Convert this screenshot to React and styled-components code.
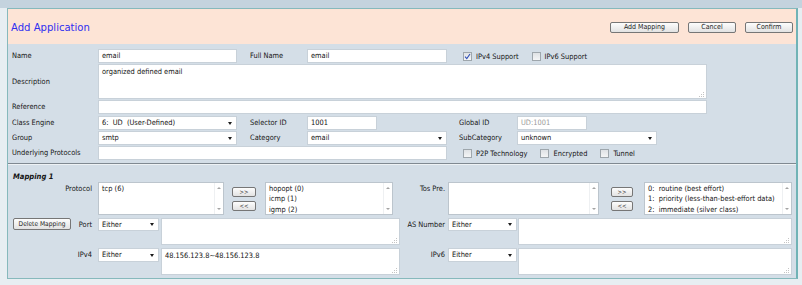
import React from "react";
import styled, { createGlobalStyle } from "styled-components";

const GlobalStyle = createGlobalStyle`
  body {
    margin: 0;
    background: #e7eef2;
    font-family: "DejaVu Sans Condensed", "Liberation Sans", sans-serif;
    font-size: 7.4px;
    color: #141414;
  }
`;

const Page = styled.div`
  width: 802px;
  height: 285px;
  overflow: hidden;
  background: #e7eef2;
`;

const TopBand = styled.div`
  height: 8px;
  background: #c4d3de;
`;

const Panel = styled.div`
  margin-left: 7px;
  width: 791px;
  box-sizing: border-box;
  border: 1px solid #86b9bc;
  border-right: 2px solid #70b3b6;
  background: #d4dee7;
`;

const Header = styled.div`
  height: 35px;
  background: #fde4d6;
  display: flex;
  align-items: center;
  justify-content: space-between;
  padding: 0 3px;
`;

const Title = styled.h1`
  margin: 1px 0 0;
  font-size: 11.2px;
  font-weight: normal;
  color: #2f2ff0;
`;

const ButtonBar = styled.div`
  display: flex;
  gap: 9px;
  margin-top: 2px;
`;

const Button = styled.button`
  width: ${(p) => p.$w}px;
  height: ${(p) => p.$h || 11}px;
  padding: 0;
  box-sizing: border-box;
  border: 1px solid #767676;
  border-radius: 2px;
  background: linear-gradient(#fdfdfd, #e2e2e2);
  font-family: inherit;
  font-size: ${(p) => p.$fs || 7}px;
  color: #222;
  line-height: 1;
`;

const FormBody = styled.div`
  padding: 5px 4px 0;
  display: grid;
  grid-template-columns: 86px 152px 57px 152px 58px 190px;
  grid-template-rows: 15px 36px 16px 15px 15px 14px;
`;

const Label = styled.div`
  line-height: 14px;
  white-space: nowrap;
  align-self: ${(p) => (p.$center ? "center" : "start")};
`;

const Field = styled.div`
  grid-column: span ${(p) => p.$span || 1};
  width: ${(p) => p.$w}px;
  height: ${(p) => p.$h || 14}px;
  box-sizing: border-box;
  background: #fff;
  border: 1px solid #c8d1d9;
  padding: 0 3px;
  line-height: 12px;
  white-space: pre;
  color: ${(p) => (p.$muted ? "#9a9a9a" : "#111")};
`;

const SelectBox = styled(Field)`
  display: flex;
  align-items: center;
  justify-content: space-between;
  padding-right: 4px;
`;

const Caret = styled.span`
  width: 0;
  height: 0;
  border-left: 2.5px solid transparent;
  border-right: 2.5px solid transparent;
  border-top: 3px solid #1c1c1c;
`;

const AreaBox = styled(Field)`
  display: flex;
  flex-direction: column;
  padding: 1px 2px 1px 3px;
`;

const AreaText = styled.div`
  flex: 1;
`;

const Grip = styled.svg`
  align-self: flex-end;
`;

const CheckGroup = styled.div`
  grid-column: span 2;
  display: flex;
  align-items: center;
  gap: 13px;
  padding-left: 4px;
  height: 14px;
`;

const CheckItem = styled.label`
  display: flex;
  align-items: center;
  gap: 4px;
  white-space: nowrap;
`;

const Box = styled.span`
  width: 9px;
  height: 9px;
  box-sizing: border-box;
  border: 1px solid #9ea6ac;
  background: linear-gradient(#dfe2e5, #f4f5f6);
  display: flex;
  align-items: center;
  justify-content: center;
`;

const Separator = styled.div`
  margin-top: 3px;
  border-top: 1px solid #808991;
  border-bottom: 1px solid #eef2f5;
`;

const MappingBody = styled.div`
  padding: 7px 4px 2px;
`;

const MapTitle = styled.div`
  font-weight: bold;
  font-style: italic;
  font-size: 7.6px;
  line-height: 9px;
  margin: 0 0 1px 1px;
`;

const MapGrid = styled.div`
  display: grid;
  grid-template-columns: 86px 302px 48px 344px;
  grid-template-rows: 36px 30px 28px;
`;

const MapLabel = styled.div`
  padding-right: ${(p) => p.$pr}px;
  text-align: right;
  line-height: 13px;
  white-space: nowrap;
`;

const PortCell = styled.div`
  display: flex;
  justify-content: space-between;
  align-items: flex-start;
  padding-right: 5px;
`;

const MapRow = styled.div`
  display: flex;
  align-items: flex-start;
  gap: ${(p) => p.$gap || 0}px;
`;

const ListBox = styled.div`
  width: ${(p) => p.$w}px;
  height: 33px;
  box-sizing: border-box;
  background: #fff;
  border: 1px solid #bcc5cd;
  display: flex;
`;

const ListItems = styled.div`
  flex: 1;
  padding: 1px 3px;
  line-height: 10.4px;
  white-space: pre;
`;

const ScrollBar = styled.div`
  width: 8px;
  display: flex;
  flex-direction: column;
  justify-content: space-between;
  align-items: center;
  padding: 4px 0;
  border-left: 1px solid #eef0f2;
`;

const ScrollArrow = styled.span`
  width: 0;
  height: 0;
  border-left: 2px solid transparent;
  border-right: 2px solid transparent;
  ${(p) => (p.$down ? "border-top" : "border-bottom")}: 2px solid #a4a4a4;
`;

const ShiftColumn = styled.div`
  display: flex;
  flex-direction: column;
  gap: 4px;
  padding-top: 5px;
  margin: 0 ${(p) => p.$mr}px 0 ${(p) => p.$ml}px;
`;

function Check({ checked, children }) {
  return (
    <CheckItem>
      <Box>
        {checked && (
          <svg width="7" height="7" viewBox="0 0 7 7">
            <path d="M1 3.6 L2.8 5.6 L6 1" fill="none" stroke="#2f4fb8" strokeWidth="1.1" />
          </svg>
        )}
      </Box>
      {children}
    </CheckItem>
  );
}

function Select({ w, h, span, children }) {
  return (
    <SelectBox $w={w} $h={h} $span={span}>
      <span>{children}</span>
      <Caret />
    </SelectBox>
  );
}

function TextArea({ w, h, span, children }) {
  return (
    <AreaBox $w={w} $h={h} $span={span}>
      <AreaText>{children}</AreaText>
      <Grip width="5" height="5" viewBox="0 0 5 5">
        <rect x="4" y="0" width="1" height="1" fill="#c4c4c4" />
        <rect x="2" y="2" width="1" height="1" fill="#c4c4c4" />
        <rect x="4" y="2" width="1" height="1" fill="#c4c4c4" />
        <rect x="0" y="4" width="1" height="1" fill="#c4c4c4" />
        <rect x="2" y="4" width="1" height="1" fill="#c4c4c4" />
        <rect x="4" y="4" width="1" height="1" fill="#c4c4c4" />
      </Grip>
    </AreaBox>
  );
}

function List({ w, items }) {
  return (
    <ListBox $w={w}>
      <ListItems>{items.join("\n")}</ListItems>
      <ScrollBar>
        <ScrollArrow />
        <ScrollArrow $down />
      </ScrollBar>
    </ListBox>
  );
}

function Shift({ ml, mr, w }) {
  return (
    <ShiftColumn $ml={ml} $mr={mr}>
      <Button $w={w} $h={10} $fs={6}>&gt;&gt;</Button>
      <Button $w={w} $h={10} $fs={6}>&lt;&lt;</Button>
    </ShiftColumn>
  );
}

export default function App() {
  return (
    <Page>
      <GlobalStyle />
      <TopBand />
      <Panel>
        <Header>
          <Title>Add Application</Title>
          <ButtonBar>
            <Button $w={69}>Add Mapping</Button>
            <Button $w={48}>Cancel</Button>
            <Button $w={48}>Confirm</Button>
          </ButtonBar>
        </Header>

        <FormBody>
          <Label>Name</Label>
          <Field $w={139}>email</Field>
          <Label>Full Name</Label>
          <Field $w={140}>email</Field>
          <CheckGroup>
            <Check checked>IPv4 Support</Check>
            <Check>IPv6 Support</Check>
          </CheckGroup>

          <Label $center>Description</Label>
          <TextArea w={609} h={35} span={5}>organized defined email</TextArea>

          <Label>Reference</Label>
          <Field $w={609} $span={5} />

          <Label>Class Engine</Label>
          <Select w={139}>6:  UD  (User-Defined)</Select>
          <Label>Selector ID</Label>
          <Field $w={70}>1001</Field>
          <Label>Global ID</Label>
          <Field $w={70} $muted>UD:1001</Field>

          <Label>Group</Label>
          <Select w={139}>smtp</Select>
          <Label>Category</Label>
          <Select w={140}>email</Select>
          <Label>SubCategory</Label>
          <Select w={140}>unknown</Select>

          <Label>Underlying Protocols</Label>
          <Field $w={349} $span={3} />
          <CheckGroup>
            <Check>P2P Technology</Check>
            <Check>Encrypted</Check>
            <Check>Tunnel</Check>
          </CheckGroup>
        </FormBody>

        <Separator />

        <MappingBody>
          <MapTitle>Mapping 1</MapTitle>
          <MapGrid>
            <MapLabel $pr={6}>Protocol</MapLabel>
            <MapRow>
              <List w={126} items={["tcp (6)"]} />
              <Shift ml={8} mr={9} w={24} />
              <List w={128} items={["hopopt (0)", "icmp (1)", "igmp (2)"]} />
            </MapRow>
            <MapLabel $pr={3}>Tos Pre.</MapLabel>
            <MapRow>
              <List w={151} items={[]} />
              <Shift ml={12} mr={11} w={22} />
              <List
                w={148}
                items={[
                  "0:  routine (best effort)",
                  "1:  priority (less-than-best-effort data)",
                  "2:  immediate (silver class)",
                ]}
              />
            </MapRow>

            <PortCell>
              <Button $w={58} $h={12} $fs={6.6} style={{ marginLeft: 1 }}>
                Delete Mapping
              </Button>
              <MapLabel $pr={1}>Port</MapLabel>
            </PortCell>
            <MapRow $gap={2}>
              <Select w={61} h={13}>Either</Select>
              <TextArea w={239} h={27} />
            </MapRow>
            <MapLabel $pr={3}>AS Number</MapLabel>
            <MapRow $gap={1}>
              <Select w={69} h={13}>Either</Select>
              <TextArea w={274} h={27} />
            </MapRow>

            <MapLabel $pr={6}>IPv4</MapLabel>
            <MapRow $gap={2}>
              <Select w={61} h={14}>Either</Select>
              <TextArea w={239} h={27}>48.156.123.8~48.156.123.8</TextArea>
            </MapRow>
            <MapLabel $pr={3}>IPv6</MapLabel>
            <MapRow $gap={1}>
              <Select w={69} h={14}>Either</Select>
              <TextArea w={274} h={27} />
            </MapRow>
          </MapGrid>
        </MappingBody>
      </Panel>
    </Page>
  );
}
